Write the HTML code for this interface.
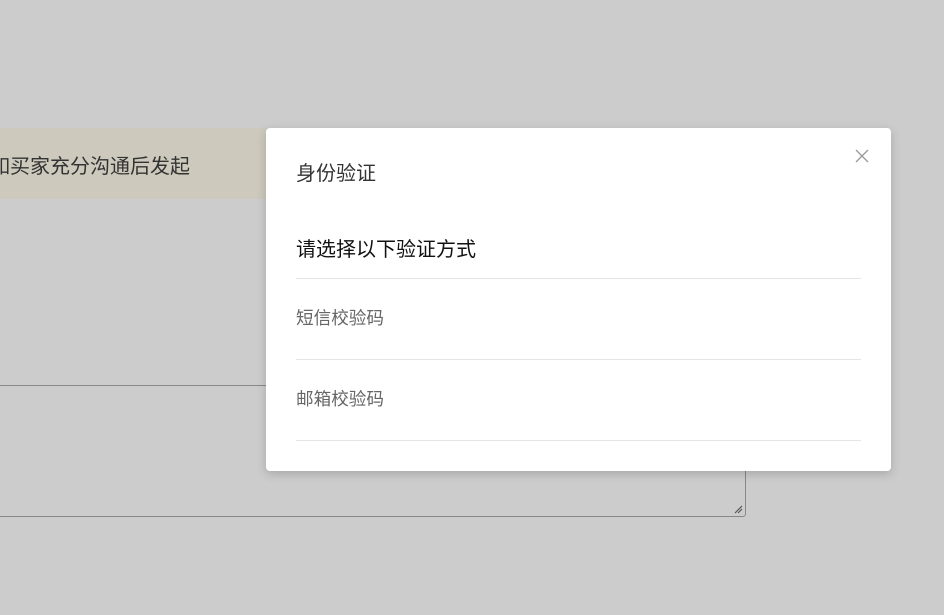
<!DOCTYPE html>
<html><head><meta charset="utf-8"><style>
*{margin:0;padding:0;box-sizing:border-box}
body{width:944px;height:615px;background:#cccccc;position:relative;overflow:hidden;font-family:"Liberation Sans","Noto Sans CJK SC",sans-serif}
.banner{position:absolute;left:0;top:128px;width:280px;height:71px;background:#cdc9bd;}
.banner span{position:absolute;left:-10px;top:22px;font-size:20px;color:#333;white-space:nowrap}
.ta{position:absolute;left:-10px;top:385px;width:756px;height:132px;border:1px solid #888;border-radius:3px}
.modal{position:absolute;left:266px;top:128px;width:625px;height:343px;background:#fff;border-radius:4px;box-shadow:0 3px 10px rgba(0,0,0,.18)}
.t{position:absolute;left:30px;top:29px;font-size:20px;color:#333}
.s{position:absolute;left:30px;top:105px;font-size:20px;color:#111}
.line{position:absolute;left:30px;width:565px;height:1px;background:#e5e5e5}
.i{position:absolute;left:30px;font-size:17.6px;color:#666}
.x{position:absolute;left:589px;top:21px;width:14px;height:14px}
</style></head><body>
<div class="banner"><span>如买家充分沟通后发起</span></div>
<div class="ta"><svg style="position:absolute;right:2px;bottom:2px" width="10" height="10"><path d="M2 9L9 2M5 9L9 5" stroke="#555" stroke-width="1.2"/></svg></div>
<div class="modal">
<svg class="x" viewBox="0 0 14 14"><path d="M1 1L13 13M13 1L1 13" stroke="#999" stroke-width="1.3"/></svg>
<div class="t">身份验证</div>
<div class="s">请选择以下验证方式</div>
<div class="line" style="top:150px"></div>
<div class="i" style="top:177px">短信校验码</div>
<div class="line" style="top:231px"></div>
<div class="i" style="top:258px">邮箱校验码</div>
<div class="line" style="top:312px"></div>
</div>
</body></html>
